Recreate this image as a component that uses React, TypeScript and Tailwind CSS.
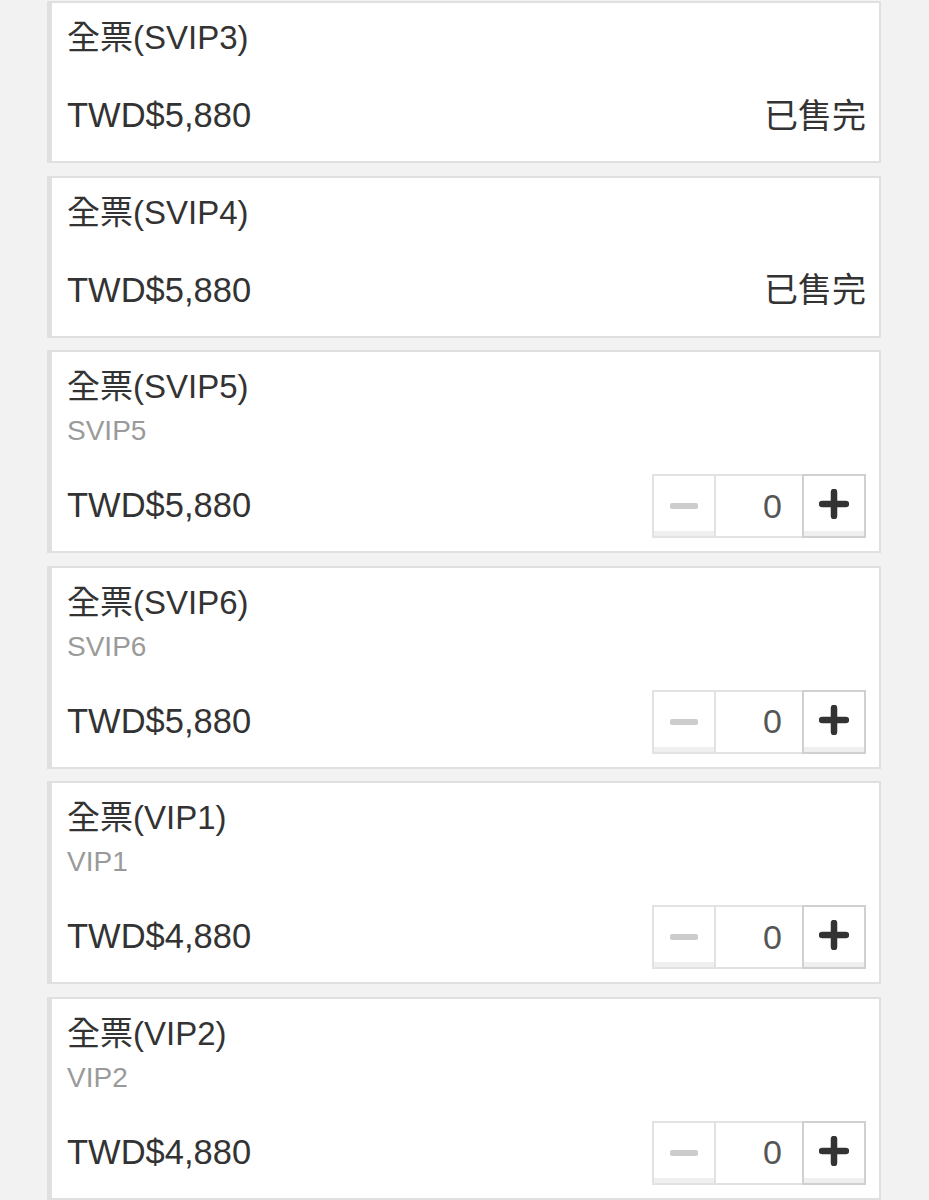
import React from 'react';

type Ticket = {
    name: string;
    sub?: string;
    price: string;
    soldOut?: boolean;
};

const tickets: Ticket[] = [
    { name: '全票(SVIP3)', price: 'TWD$5,880', soldOut: true },
    { name: '全票(SVIP4)', price: 'TWD$5,880', soldOut: true },
    { name: '全票(SVIP5)', sub: 'SVIP5', price: 'TWD$5,880' },
    { name: '全票(SVIP6)', sub: 'SVIP6', price: 'TWD$5,880' },
    { name: '全票(VIP1)', sub: 'VIP1', price: 'TWD$4,880' },
    { name: '全票(VIP2)', sub: 'VIP2', price: 'TWD$4,880' },
];

const Stepper: React.FC = () => {
    return (
        <div className="flex h-[64px] w-[214px]">
            <button className="relative flex h-full w-[64px] items-center justify-center border-2 border-[#e2e2e2] bg-white">
                <span className="block h-[6px] w-[28px] rounded-[2px] bg-[#cccccc]" />
                <span className="absolute bottom-0 left-0 right-0 h-[5px] bg-[#efefef]" />
            </button>
            <div className="flex h-full w-[86px] items-center justify-end border-y-2 border-[#e2e2e2] bg-white pr-[20px] text-[34px] text-[#555555]">
                0
            </div>
            <button className="relative flex h-full w-[64px] items-center justify-center border-2 border-[#d0d0d0] bg-white">
                <svg width="30" height="30" viewBox="0 0 30 30" className="relative -top-[2px]">
                    <path d="M15 3v24M3 15h24" stroke="#333333" strokeWidth="6.5" strokeLinecap="round" />
                </svg>
                <span className="absolute bottom-0 left-0 right-0 h-[5px] bg-[#efefef]" />
            </button>
        </div>
    );
};

const TicketCard: React.FC<{ t: Ticket }> = ({ t }) => {
    return (
        <div className="border-2 border-l-[5px] border-[#e0e0e0] bg-white pl-[15px] pr-[13px] pt-[15px] pb-[13px]">
            <div className="h-[40px] text-[33px] leading-[40px] text-[#333333]">{t.name}</div>
            {t.sub && (
                <div className="mt-[7px] h-[34px] text-[28px] leading-[34px] text-[#9a9a9a]">{t.sub}</div>
            )}
            <div className="mt-[26px] flex h-[64px] items-center justify-between">
                <span className="text-[34.5px] text-[#333333]">{t.price}</span>
                {t.soldOut ? (
                    <span className="text-[34px] text-[#333333]">已售完</span>
                ) : (
                    <Stepper />
                )}
            </div>
        </div>
    );
};

const App: React.FC = () => {
    return (
        <div
            className="min-h-[1200px] bg-[#f2f2f2] pl-[47px] pr-[48px] pt-[1px]"
            style={{ fontFamily: '"Liberation Sans", Arial, "Noto Sans CJK TC", sans-serif' }}
        >
            <div className="flex flex-col gap-[12.5px]">
                {tickets.map((t) => (
                    <TicketCard key={t.name} t={t} />
                ))}
            </div>
        </div>
    );
};

export default App;
